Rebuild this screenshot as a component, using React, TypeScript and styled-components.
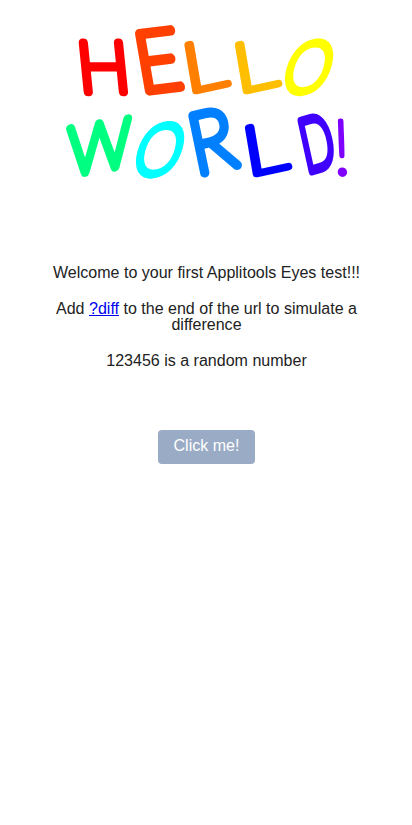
import React from 'react';
import styled, { createGlobalStyle } from 'styled-components';

const GlobalStyle = createGlobalStyle`
  body {
    margin: 0;
    background: #fff;
    color: #222;
    font: 16.04px/16px "Liberation Sans", Arial, sans-serif;
  }
`;

const Page = styled.main`
  display: flex;
  flex-direction: column;
  align-items: center;
  min-height: 825px;
  text-align: center;
`;

const Banner = styled.header`
  height: 264px;
  width: 412px;
`;

const Lettering = styled.svg`
  display: block;
  width: 412px;
  height: 200px;

  text {
    font: 100 100px Lato, sans-serif;
    stroke-linejoin: round;
    stroke-linecap: round;
  }
`;

const Copy = styled.section`
  display: flex;
  flex-direction: column;
  gap: 20px;
  width: 340px;
  padding-left: 1px;
`;

const Paragraph = styled.p`
  margin: 0;
`;

const Link = styled.a`
  color: #0000ee;
  text-decoration: underline;
`;

const Button = styled.button`
  margin: 62px 0 0 1px;
  width: 97px;
  height: 34px;
  padding: 0 0 4px;
  border: 0;
  border-radius: 4px;
  background: #9aabc5;
  color: #fff;
  font: inherit;
`;

type Point = [number, number];

interface Letter {
  char: string;
  color: string;
  /** Ink extent of the character at 100px. */
  ink: Point;
  /** Baseline left corner, and the vectors along and up from it. */
  base: Point;
  along: Point;
  up: Point;
  stroke: number;
}

const CAP = 71;

const letters: Letter[] = [
  { char: 'H', color: '#ff0000', ink: [11, 64], base: [87.5, 91.5], along: [37, 0], up: [-5, -50], stroke: 12 },
  { char: 'E', color: '#ff4000', ink: [11, 53], base: [149, 91], along: [32, -4], up: [-10, -58], stroke: 11.5 },
  { char: 'L', color: '#ff8000', ink: [11, 49], base: [196, 91], along: [32, -7], up: [-8, -47], stroke: 10 },
  { char: 'L', color: '#ffbf00', ink: [11, 49], base: [246.5, 91], along: [32, -7], up: [-8, -47], stroke: 10 },
  { char: 'O', color: '#ffff00', ink: [6, 72], base: [283, 93], along: [39, -3], up: [13, -49], stroke: 12 },
  { char: 'W', color: '#00ff80', ink: [3, 97], base: [71, 175], along: [58, -10], up: [-1, -47], stroke: 13 },
  { char: 'O', color: '#00ffff', ink: [6, 72], base: [134, 175.5], along: [39, -3], up: [13, -49], stroke: 12 },
  { char: 'R', color: '#0080ff', ink: [11, 57], base: [204, 173], along: [34, -8], up: [-12, -58], stroke: 11 },
  { char: 'L', color: '#0000ff', ink: [11, 49], base: [256.5, 174], along: [32, -7], up: [-8, -47], stroke: 10 },
  { char: 'D', color: '#4000ff', ink: [11, 69], base: [311, 171], along: [24, -7], up: [-11, -50], stroke: 13 },
  { char: '!', color: '#8000ff', ink: [8, 16], base: [339.5, 174], along: [6, 0], up: [-2, -54], stroke: 6 },
];

const placement = ({ ink: [left, right], base, along, up }: Letter) => {
  const a = along[0] / (right - left);
  const b = along[1] / (right - left);
  return `matrix(${a} ${b} ${-up[0] / CAP} ${-up[1] / CAP} ${base[0] - a * left} ${base[1] - b * left})`;
};

export default function App() {
  return (
    <Page>
      <GlobalStyle />
      <Banner>
        <Lettering viewBox="0 0 412 200" role="heading" aria-label="Hello World!">
          {letters.map((letter, i) => (
            <text key={i} transform={placement(letter)} fill={letter.color} stroke={letter.color} strokeWidth={letter.stroke}>
              {letter.char}
            </text>
          ))}
        </Lettering>
      </Banner>
      <Copy>
        <Paragraph>Welcome to your first Applitools Eyes test!!!</Paragraph>
        <Paragraph>
          Add <Link href="?diff">?diff</Link> to the end of the url to simulate a difference
        </Paragraph>
        <Paragraph>123456 is a random number</Paragraph>
      </Copy>
      <Button type="button">Click me!</Button>
    </Page>
  );
}
